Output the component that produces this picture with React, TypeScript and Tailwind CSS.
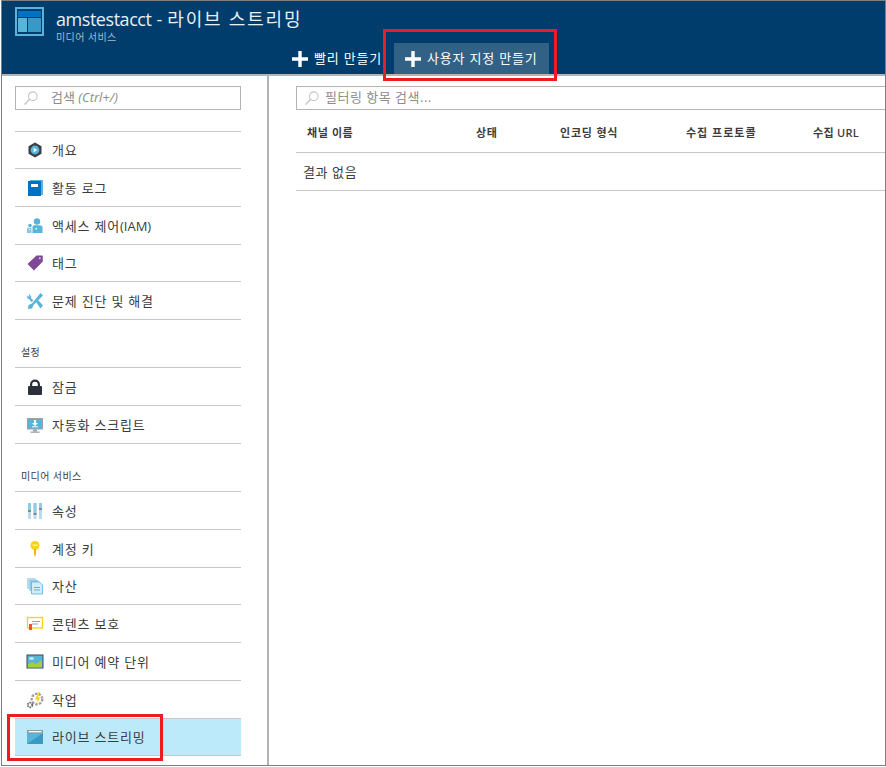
const fontStack = "font-['Open_Sans','Noto_Sans_CJK_KR',sans-serif]";

// menu icons, drawn at 18x18
const IconOverview = () => (
  <svg width="18" height="18" viewBox="0 0 18 18">
    <path d="M9 1.500l6.500 3.700v7.600L9 16.500l-6.500-3.700V5.200z" fill="#3a3f47" />
    <circle cx="9" cy="9" r="4.400" fill="#59b4d9" />
    <path d="M7.600 6.800l3.600 2.200-3.600 2.200z" fill="#fff" />
  </svg>
);
const IconLog = () => (
  <svg width="18" height="18" viewBox="0 0 18 18">
    <rect x="4" y="1" width="13" height="15" fill="#59b4d9" />
    <rect x="2" y="2" width="13" height="15" fill="#0072c6" />
    <rect x="5" y="5" width="7" height="3" fill="#fff" />
  </svg>
);
const IconAccess = () => (
  <svg width="18" height="18" viewBox="0 0 18 18">
    <circle cx="11" cy="4.500" r="3.200" fill="#59b4d9" />
    <path d="M6.500 16v-6c0-1 1-1.800 2-1.800h5c1 0 3 .8 3 1.800v6z" fill="#59b4d9" />
    <circle cx="4" cy="8.500" r="1.800" fill="#59b4d9" />
    <path d="M1 16v-4c0-.8.8-1.300 1.500-1.300h3V16z" fill="#7fc6e2" />
    <rect x="9.500" y="11" width="1.500" height="1.500" fill="#fff" />
    <rect x="3" y="12" width="1.200" height="1.200" fill="#fff" />
  </svg>
);
const IconTag = () => (
  <svg width="18" height="18" viewBox="0 0 18 18">
    <path d="M10.500 1.500h5.500a.8.8 0 0 1 .8.800v5.200L8 16.500 1.500 10z" fill="#804998" />
    <circle cx="13.800" cy="4.200" r="1" fill="#d9c3e3" />
  </svg>
);
const IconTools = () => (
  <svg width="18" height="18" viewBox="0 0 18 18">
    <path d="M2.500 1.500l3 3-.8 1.200L7.500 8.500 5.500 10 3 7 1.500 6.500 1 3.500 3.500 5z" fill="#59b4d9" />
    <path d="M14.500 1l2.500 2.500-9.500 9.500-1.500 3.500-4 .5.500-4 3.500-1.500z" fill="#59b4d9" />
    <path d="M10 10l2-2 5 5.500-2.500 3z" fill="#59b4d9" />
  </svg>
);
const IconLock = () => (
  <svg width="18" height="18" viewBox="0 0 18 18">
    <path d="M4 8V6.500a5 5 0 0 1 10 0V8h-2.200V6.500a2.800 2.800 0 0 0-5.600 0V8z" fill="#2b303a" />
    <rect x="2" y="8" width="14" height="9" rx="1" fill="#2b303a" />
  </svg>
);
const IconScript = () => (
  <svg width="18" height="18" viewBox="0 0 18 18">
    <rect x="1" y="2" width="16" height="11.500" fill="#a0a1a2" />
    <rect x="2" y="3" width="14" height="9.500" fill="#59b4d9" />
    <path d="M8 4h2v3h2l-3 3-3-3h2z" fill="#fff" />
    <rect x="6" y="10.300" width="6" height="1" fill="#fff" />
    <rect x="7" y="13.500" width="4" height="2" fill="#a0a1a2" />
    <rect x="4.500" y="15.500" width="9" height="1.300" fill="#a0a1a2" />
  </svg>
);
const IconProps = () => (
  <svg width="18" height="18" viewBox="0 0 18 18">
    <rect x="2" y="1" width="3" height="16" fill="#b8dcec" />
    <rect x="7.500" y="1" width="3" height="16" fill="#b8dcec" />
    <rect x="13" y="1" width="3" height="16" fill="#b8dcec" />
    <rect x="2" y="1" width="3" height="8" fill="#8fcbe4" />
    <rect x="7.500" y="1" width="3" height="11" fill="#8fcbe4" />
    <rect x="13" y="1" width="3" height="6" fill="#8fcbe4" />
    <rect x="2" y="8" width="3" height="2" fill="#8a8a8a" />
    <rect x="7.500" y="11" width="3" height="2" fill="#8a8a8a" />
    <rect x="13" y="6" width="3" height="2" fill="#8a8a8a" />
  </svg>
);
const IconKey = () => (
  <svg width="18" height="18" viewBox="0 0 18 18">
    <circle cx="9" cy="5.500" r="4.500" fill="#fcd116" />
    <rect x="6.500" y="4.500" width="5" height="1.500" fill="#fff2a8" />
    <path d="M8 9h2v5.500l-1 2-1-1 .5-1-.5-1z" fill="#e5b90e" />
  </svg>
);
const IconAssets = () => (
  <svg width="18" height="18" viewBox="0 0 18 18">
    <path d="M1 1h8l2 2v9H1z" fill="#b8dcec" />
    <path d="M3.500 3h8l2 2v9h-10z" fill="#8fcbe4" />
    <path d="M5.500 5h8l3 3v9h-11z" fill="#d4ecf6" stroke="#59b4d9" strokeWidth=".8" />
    <rect x="8" y="10" width="6" height="1" fill="#59b4d9" />
    <rect x="8" y="12.500" width="6" height="1" fill="#59b4d9" />
  </svg>
);
const IconContent = () => (
  <svg width="18" height="18" viewBox="0 0 18 18">
    <rect x="1.500" y="2.500" width="15" height="10.500" fill="#fff" stroke="#fcd116" strokeWidth="1.300" />
    <rect x="6" y="6" width="8" height="1" fill="#a0a1a2" />
    <rect x="6" y="8.500" width="6" height="1" fill="#a0a1a2" />
    <rect x="3" y="9" width="3" height="6" fill="#e25a1c" />
  </svg>
);
const IconMedia = () => (
  <svg width="18" height="18" viewBox="0 0 18 18">
    <rect x="1" y="2" width="16" height="13" fill="#59b4d9" />
    <rect x="1" y="2" width="16" height="13" fill="none" stroke="#3a4a55" strokeWidth="1" />
    <path d="M2 14.500v-3l4-2.500 4 2 6-4v7.500z" fill="#a6ce39" />
    <ellipse cx="5.500" cy="5.500" rx="2.500" ry="1.300" fill="#d4ecf6" />
  </svg>
);
const IconJob = () => (
  <svg width="18" height="18" viewBox="0 0 18 18">
    <circle cx="11" cy="8" r="5.300" fill="none" stroke="#a0a1a2" strokeWidth="2.400" strokeDasharray="2.500 1.200" />
    <path d="M12.500 1L9 8.500h2.500L10 13l4.500-6.500H12L14 1z" fill="#fcd116" />
    <circle cx="4" cy="14" r="2.300" fill="none" stroke="#6a6a6a" strokeWidth="1.800" strokeDasharray="1.500 .8" />
  </svg>
);
const IconLive = () => (
  <svg width="18" height="18" viewBox="0 0 18 18">
    <rect x="1" y="2" width="16" height="14" fill="#59b4d9" />
    <path d="M1 16L17 5v11z" fill="#3999c6" />
    <rect x="1" y="2" width="16" height="3.400" fill="#8a9aa5" />
    <rect x="2.500" y="3" width="13" height="1.300" fill="#fff" />
  </svg>
);

const SearchIcon = () => (
  <svg width="16" height="16" viewBox="0 0 16 16" fill="none" stroke="#c4c4c4" strokeWidth="1.100">
    <circle cx="9.800" cy="6.200" r="4.300" />
    <path d="M6.700 9.300L1.500 14.500" strokeWidth="1.400" />
  </svg>
);

const PlusIcon = () => (
  <svg width="16" height="16" viewBox="0 0 16 16">
    <path d="M6.300 0h3.400v6.300H16v3.400H9.700V16H6.300V9.700H0V6.300h6.300z" fill="#fff" />
  </svg>
);

const MenuRow = ({
  icon,
  label,
  heightClass = "h-[38px]",
  active = false,
}: {
  icon: React.ReactNode;
  label: React.ReactNode;
  heightClass?: string;
  active?: boolean;
}) => (
  <div
    className={`flex items-center border-b border-[#c8c8c8] ${heightClass} ${active ? "bg-[#bdeafb]" : ""}`}
  >
    <div className="ml-[11px] flex w-[26px] shrink-0 items-center">{icon}</div>
    <span className="mt-[2px] text-[13px] tracking-[0.8px] text-[#3c3c3c]">{label}</span>
  </div>
);

const columns = [
  { label: "채널 이름", width: "w-[169px]", spacing: "tracking-[0.6px]" },
  { label: "상태", width: "w-[84px]", spacing: "tracking-[0.6px]" },
  { label: "인코딩 형식", width: "w-[126px]", spacing: "tracking-[0.8px]" },
  { label: "수집 프로토콜", width: "w-[127px]", spacing: "tracking-[1px]" },
  { label: "수집 URL", width: "w-[60px]", spacing: "tracking-[0.3px]" },
];

export default function App() {
  return (
    <div className={`h-[767px] w-[886px] overflow-hidden bg-white pl-[1px] ${fontStack}`}>
      <div className="flex h-[766px] w-[885px] flex-col border border-[#7f7f7f]">
        {/* Header */}
        <div className="flex h-[75px] shrink-0 flex-col border-b-2 border-[#b4b4b4] bg-[#003c6c]">
          <div className="flex h-[42px] shrink-0 items-start pl-[13px] pt-[6px]">
            <svg width="30" height="30" viewBox="0 0 30 30" className="shrink-0">
              <rect x="0" y="0" width="29" height="29" fill="#59b4d9" />
              <rect x="2" y="2" width="25" height="25" fill="#003c6c" />
              <rect x="3" y="4" width="23" height="6" fill="#0072c6" />
              <rect x="3" y="11" width="9" height="14" fill="#59b4d9" />
              <rect x="13" y="11" width="13" height="14" fill="#3999c6" />
            </svg>
            <div className="ml-[11px] flex flex-col">
              <span className="text-[18px] leading-[24px] whitespace-nowrap text-[#e6f0f6]">
                <span className="tracking-[-0.45px]">amstestacct</span>
                <span className="mx-[5px]">-</span>
                <span className="tracking-[1.8px]">라이브 스트리밍</span>
              </span>
              <span className="text-[10px] leading-[12px] tracking-[0.4px] text-[#a6bccd]">미디어 서비스</span>
            </div>
          </div>
          <div className="flex h-[31px] items-stretch pl-[290px]">
            <div className="flex w-[102px] items-center">
              <PlusIcon />
              <span className="ml-[6px] text-[13px] tracking-[0.8px] whitespace-nowrap text-white">빨리 만들기</span>
            </div>
            <div className="flex w-[155px] items-center bg-[#326186] pl-[11px]">
              <PlusIcon />
              <span className="ml-[6px] text-[13px] tracking-[0.8px] whitespace-nowrap text-white">사용자 지정 만들기</span>
            </div>
          </div>
        </div>

        <div className="flex min-h-0 flex-1">
          {/* Sidebar */}
          <div className="w-[267px] shrink-0 border-r-2 border-[#b4b4b4] pl-[13px] pr-[26px] pt-[10px]">
            <div className="flex h-[24px] items-center border border-[#b4b4b4] pl-[7px]">
              <SearchIcon />
              <span className="ml-[12px] text-[13px] text-[#8c8c8c]">
                검색 <span className="italic">(Ctrl+/)</span>
              </span>
            </div>
            <div className="mt-[21px] border-t border-[#c8c8c8]">
              <MenuRow icon={<IconOverview />} label="개요" heightClass="h-[37px]" />
              <MenuRow icon={<IconLog />} label="활동 로그" />
              <MenuRow
                icon={<IconAccess />}
                label={
                  <>
                    액세스 제어<span className="tracking-normal">(IAM)</span>
                  </>
                }
              />
              <MenuRow icon={<IconTag />} label="태그" heightClass="h-[37px]" />
              <MenuRow icon={<IconTools />} label="문제 진단 및 해결" />
            </div>
            <div className="flex h-[48px] items-end border-b border-[#c8c8c8] pb-[8px] pl-[6px] text-[10px] leading-[14px] tracking-[0.4px] text-[#3c3c3c]">
              설정
            </div>
            <MenuRow icon={<IconLock />} label="잠금" />
            <MenuRow icon={<IconScript />} label="자동화 스크립트" />
            <div className="flex h-[48px] items-end border-b border-[#c8c8c8] pb-[8px] pl-[6px] text-[10px] leading-[14px] tracking-[0.4px] text-[#3c3c3c]">
              미디어 서비스
            </div>
            <MenuRow icon={<IconProps />} label="속성" />
            <MenuRow icon={<IconKey />} label="계정 키" />
            <MenuRow icon={<IconAssets />} label="자산" heightClass="h-[37px]" />
            <MenuRow icon={<IconContent />} label="콘텐츠 보호" />
            <MenuRow icon={<IconMedia />} label="미디어 예약 단위" />
            <MenuRow icon={<IconJob />} label="작업" />
            <MenuRow icon={<IconLive />} label="라이브 스트리밍" heightClass="h-[37px]" active />
          </div>

          {/* Main */}
          <div className="min-w-0 flex-1 pl-[27px] pt-[10px]">
            <div className="flex h-[24px] items-center border border-r-0 border-[#b4b4b4] pl-[7px]">
              <SearchIcon />
              <span className="ml-[5px] text-[13px] tracking-[0.5px] text-[#8c8c8c]">필터링 항목 검색...</span>
            </div>
            <div className="flex h-[43px] items-center border-b border-[#c8c8c8] pl-[11px]">
              {columns.map((col) => (
                <div
                  key={col.label}
                  className={`${col.width} ${col.spacing} mt-[4px] shrink-0 text-[11px] font-semibold whitespace-nowrap text-[#3c3c3c]`}
                >
                  {col.label}
                </div>
              ))}
            </div>
            <div className="flex h-[38px] items-center border-b border-[#c8c8c8] pl-[7px] text-[13px] tracking-[0.6px] text-[#3c3c3c]">
              <span className="mt-[2px]">결과 없음</span>
            </div>
          </div>
        </div>
      </div>

      {/* Red highlights */}
      <div className="absolute left-[383px] top-[29px] h-[52px] w-[174px] border-[3px] border-[#ed1c24]" />
      <div className="absolute left-[7px] top-[714px] h-[47px] w-[156px] border-[3px] border-[#ed1c24]" />
    </div>
  );
}
